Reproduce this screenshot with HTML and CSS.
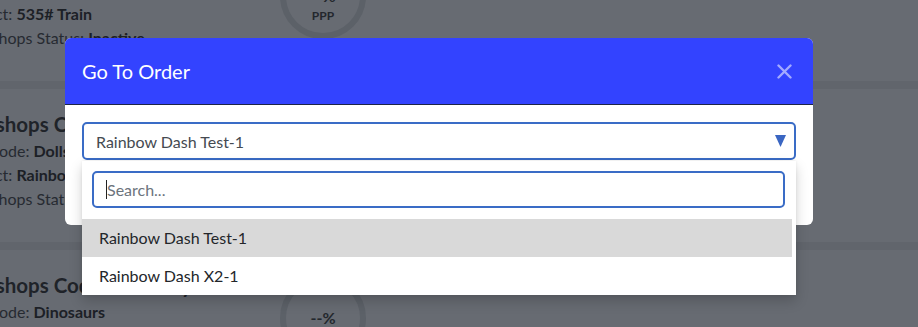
FILE: index.html
```html
<!DOCTYPE html>
<html lang="en">
<head>
<meta charset="utf-8">
<title>Go To Order</title>
<link rel="stylesheet" href="styles.css">
</head>
<body>
<div class="page">
  <section class="card">
    <div class="info">
      <h3 class="card-title">Workshops Code Summary</h3>
      <p class="row">Toys Code: <b>Trains</b></p>
      <p class="row">Product: <b>535# Train</b></p>
      <p class="row">Workshops Status: <b>Inactive</b></p>
    </div>
    <div class="ring"><span class="ring-val">--%</span><span class="ring-lbl">PPP</span></div>
  </section>
  <section class="card">
    <div class="info">
      <h3 class="card-title">Workshops Code Summary</h3>
      <p class="row">Toys Code: <b>Dolls</b></p>
      <p class="row">Product: <b>Rainbow Dash</b></p>
      <p class="row">Workshops Status: <b>Active</b></p>
    </div>
    <div class="ring"><span class="ring-val">--%</span><span class="ring-lbl">PPP</span></div>
  </section>
  <section class="card">
    <div class="info">
      <h3 class="card-title">Workshops Code Summary</h3>
      <p class="row">Toys Code: <b>Dinosaurs</b></p>
      <p class="row">Product: <b>T-Rex</b></p>
      <p class="row">Workshops Status: <b>Active</b></p>
    </div>
    <div class="ring"><span class="ring-val">--%</span><span class="ring-lbl">PPP</span></div>
  </section>
</div>

<div class="modal">
  <div class="modal-header">
    <h2 class="modal-title">Go To Order</h2>
    <svg class="close" width="15" height="15" viewBox="0 0 15 15" aria-label="Close">
      <path d="M1.5 1.5 L13.5 13.5 M13.5 1.5 L1.5 13.5" stroke="#a3aaff" stroke-width="2.4" stroke-linecap="round" fill="none"/>
    </svg>
  </div>
  <div class="modal-body">
    <div class="select-wrap">
      <div class="select">
        <span class="select-text">Rainbow Dash Test-1</span>
        <svg class="caret-down" width="11" height="12" viewBox="0 0 11 12"><polygon points="0,0 11,0 5.5,12" fill="#3a66c2"/></svg>
      </div>
      <div class="dropdown">
        <div class="search">
          <span class="cursor"></span><span class="placeholder">Search...</span>
        </div>
        <ul class="options">
          <li class="option active">Rainbow Dash Test-1</li>
          <li class="option">Rainbow Dash X2-1</li>
        </ul>
      </div>
    </div>
  </div>
</div>
</body>
</html>
```

FILE: styles.css
```css
html, body {
  margin: 0;
  padding: 0;
}
body {
  width: 918px;
  height: 327px;
  overflow: hidden;
  background: #61656c;
  font-family: "Lato", "Liberation Sans", sans-serif;
  position: relative;
}

.page {
  display: flex;
  flex-direction: column;
  gap: 8px;
  margin-top: -72px;
}

.card {
  height: 153px;
  background: #676b72;
  display: flex;
  align-items: flex-start;
  padding-top: 23px;
  box-sizing: border-box;
  color: #1f2329;
}

.info {
  margin-left: -47px;
  width: 327px;
  flex: none;
}

.card-title {
  margin: 0 0 3px -8px;
  font-size: 20.5px;
  line-height: 24px;
  font-weight: 700;
  white-space: nowrap;
}

.row {
  margin: 0;
  font-size: 16px;
  line-height: 24px;
  white-space: nowrap;
  color: #262a31;
}
.row b {
  font-weight: 700;
  color: #1c2026;
}

.ring {
  margin-top: 2px;
  width: 86px;
  height: 86px;
  box-sizing: border-box;
  border: 6px solid #5c6168;
  border-radius: 50%;
  display: flex;
  flex-direction: column;
  align-items: center;
  justify-content: center;
  padding-top: 20px;
  flex: none;
}
.ring-val {
  font-size: 16px;
  line-height: 20px;
  font-weight: 700;
  color: #23272d;
}
.ring-lbl {
  font-size: 12px;
  line-height: 20px;
  font-weight: 700;
  color: #23272d;
}

/* modal */
.modal {
  position: absolute;
  left: 65px;
  top: 38px;
  width: 748px;
  background: #fff;
  border-radius: 6px;
}
.modal-header {
  height: 67px;
  box-sizing: border-box;
  background: #3343ff;
  border-bottom: 1px solid #1d2547;
  border-radius: 6px 6px 0 0;
  display: flex;
  align-items: center;
  justify-content: space-between;
  padding: 0 21px 0 17px;
}
.modal-title {
  margin: 0;
  font-size: 20px;
  font-weight: 400;
  color: #fff;
  line-height: 24px;
}
.close {
  display: block;
}

.modal-body {
  padding: 17px 17px 65px;
}

.select-wrap {
  position: relative;
}
.select {
  height: 38px;
  box-sizing: border-box;
  border: 2px solid #3a6cc6;
  border-radius: 5px;
  display: flex;
  align-items: center;
  justify-content: space-between;
  padding: 0 8px 0 12px;
}
.select-text {
  font-size: 16px;
  color: #454a51;
}
.caret-down {
  display: block;
}

.dropdown {
  position: absolute;
  left: 0;
  right: 0;
  top: calc(100% + 1px);
  background: #fff;
  box-shadow: 0 6px 12px rgba(0, 0, 0, 0.18), 0 0 3px rgba(0, 0, 0, 0.08);
  padding: 10px 0 0;
  z-index: 2;
}
.search {
  margin: 0 11px 0 10px;
  height: 37px;
  box-sizing: border-box;
  border: 2px solid #3a6cc6;
  border-radius: 5px;
  display: flex;
  align-items: center;
  padding-left: 12px;
}
.cursor {
  width: 1px;
  height: 19px;
  background: #222;
}
.placeholder {
  font-size: 16px;
  color: #6c747c;
}

.options {
  list-style: none;
  margin: 11px 4px 0 0;
  padding: 0;
}
.option {
  height: 38px;
  line-height: 38px;
  padding-left: 17px;
  font-size: 16px;
  color: #23262a;
}
.option.active {
  background: #d9d9d9;
}
```
